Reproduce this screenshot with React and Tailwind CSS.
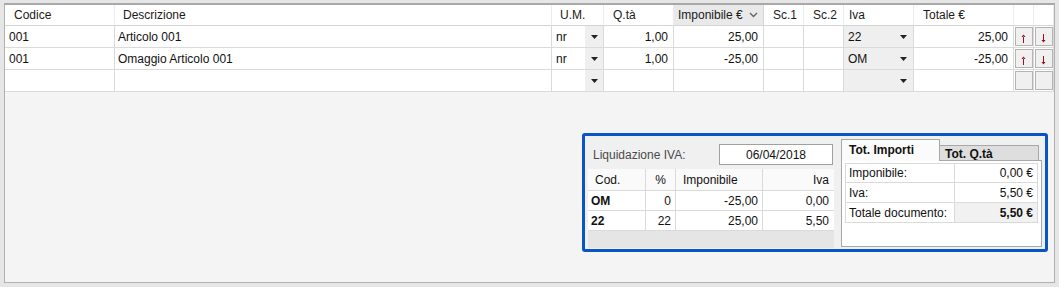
import React from "react";

const cols = "grid-cols-[110px_437px_52px_70px_90px_40px_40px_70px_100px_20px_20px]";

function Arrow() {
  return (
    <svg width="7" height="4" viewBox="0 0 7 4" className="block">
      <path d="M0 0H7L3.5 4Z" fill="#222" />
    </svg>
  );
}

function HeaderCell({ children, className = "" }) {
  return (
    <div className={"h-[21px] border-r border-[#ececec] border-b border-b-[#d4d4d4] flex items-center text-[12px] text-[#1a1a1a] " + className}>
      {children}
    </div>
  );
}

function Cell({ children, className = "" }) {
  return (
    <div className={"h-[22px] border-r border-b border-[#dadada] flex items-center text-[12px] text-[#111] " + className}>
      {children}
    </div>
  );
}

function UpDown({ up }) {
  return (
    <svg width="5" height="9" viewBox="0 0 5 9" className="block">
      {up ? (
        <path d="M2.5 0.5L0.5 3H4.5Z M2 2.5H3V9H2Z" fill="#9a0d24" />
      ) : (
        <path d="M2.5 8.5L0.5 6H4.5Z M2 0H3V6.5H2Z" fill="#9a0d24" />
      )}
    </svg>
  );
}

function Btn({ children }) {
  return (
    <div className="h-[22px] border-r border-b border-[#dadada] flex items-center justify-center bg-white">
      <div className="w-[18px] h-[19px] border border-[#b4b4b4] bg-[#f0f0f0] flex items-center justify-center pt-[3px]">
        {children}
      </div>
    </div>
  );
}

function Row({ cod, desc, um, qta, imp, iva, tot, buttons }) {
  return (
    <>
      <Cell className="pl-[4px]">{cod}</Cell>
      <Cell className="pl-[3px]">{desc}</Cell>
      <Cell className="pl-[4px] justify-between !pr-0 border-r-[#dadada]">
        <span>{um}</span>
        <span className="w-[18px] h-full bg-[#efefef] flex items-center justify-center"><Arrow /></span>
      </Cell>
      <Cell className="justify-end pr-[5px]">{qta}</Cell>
      <Cell className="justify-end pr-[5px]">{imp}</Cell>
      <Cell></Cell>
      <Cell></Cell>
      <Cell className="bg-[#efefef] pl-[4px] justify-between pr-[6px] text-[#1a1a40]">
        <span>{iva}</span>
        <Arrow />
      </Cell>
      <Cell className="justify-end pr-[5px] text-[#5a5a5a]">{tot}</Cell>
      {buttons ? (
        <>
          <Btn><UpDown up /></Btn>
          <Btn><UpDown /></Btn>
        </>
      ) : (
        <>
          <Btn></Btn>
          <Btn></Btn>
        </>
      )}
    </>
  );
}

export default function App() {
  return (
    <div className="w-[1059px] h-[287px] bg-[#e6e6e6] pt-[3px] pl-[4px] overflow-hidden" style={{ fontFamily: '"Liberation Sans", Arial, sans-serif' }}>
      <div className="w-[1051px] h-[280px] bg-[#f4f4f4] border-t-2 border-t-[#a8a8a8] border-l border-r border-b border-[#b0b0b0] flex flex-col">
        <div className={"grid " + cols + " bg-white"}>
          <HeaderCell className="pl-[9px]">Codice</HeaderCell>
          <HeaderCell className="pl-[8px]">Descrizione</HeaderCell>
          <HeaderCell className="pl-[8px]">U.M.</HeaderCell>
          <HeaderCell className="pl-[9px]">Q.tà</HeaderCell>
          <HeaderCell className="pl-[4px] bg-[#e9e9e9] justify-between pr-[5px] border-r-[#d8d8d8]">
            <span>Imponibile €</span>
            <svg width="9" height="6" viewBox="0 0 9 6"><path d="M1 1L4.5 4.5L8 1" stroke="#666" strokeWidth="1.4" fill="none" /></svg>
          </HeaderCell>
          <HeaderCell className="pl-[9px]">Sc.1</HeaderCell>
          <HeaderCell className="pl-[9px]">Sc.2</HeaderCell>
          <HeaderCell className="pl-[5px]">Iva</HeaderCell>
          <HeaderCell className="pl-[9px]">Totale €</HeaderCell>
          <HeaderCell></HeaderCell>
          <HeaderCell></HeaderCell>

          <Row cod="001" desc="Articolo 001" um="nr" qta="1,00" imp="25,00" iva="22" tot="25,00" buttons />
          <Row cod="001" desc="Omaggio Articolo 001" um="nr" qta="1,00" imp="-25,00" iva="OM" tot="-25,00" buttons />
          <Row cod="" desc="" um="" qta="" imp="" iva="" tot="" />
        </div>

        <div className="flex justify-end pr-[6px] mt-[41px]">
          <div className="w-[466px] h-[119px] border-[3px] border-[#0a55c6] rounded-[3px] bg-[#f0f0f0] flex pl-[2px] pt-[2px]">
            {/* left panel */}
            <div className="w-[249px] h-[110px] flex flex-col">
              <div className="h-[31px] flex items-center pl-[6px] pt-[2px]">
                <span className="text-[12px] text-[#4a4a4a] w-[126px]">Liquidazione IVA:</span>
                <div className="w-[114px] h-[21px] bg-white border border-[#a0a0a0] flex items-center justify-center text-[12px] text-[#111]">06/04/2018</div>
              </div>
              <div className="bg-[#e5e5e5] flex-1 ml-[1px] mr-[2px]">
                <div className="grid grid-cols-[58px_30px_87px_71px] bg-white text-[12px] text-[#111]">
                  <div className="h-[22px] border-r border-b border-[#dadada] flex items-center pl-[7px] bg-[#fafafa]">Cod.</div>
                  <div className="h-[22px] border-r border-b border-[#dadada] flex items-center justify-center bg-[#fafafa]">%</div>
                  <div className="h-[22px] border-r border-b border-[#dadada] flex items-center pl-[7px] bg-[#fafafa]">Imponibile</div>
                  <div className="h-[22px] border-b border-[#dadada] flex items-center justify-end pr-[5px] bg-[#fafafa]">Iva</div>

                  <div className="h-[20px] border-r border-b border-[#dadada] flex items-center pl-[3px] font-bold">OM</div>
                  <div className="h-[20px] border-r border-b border-[#dadada] flex items-center justify-end pr-[4px]">0</div>
                  <div className="h-[20px] border-r border-b border-[#dadada] flex items-center justify-end pr-[4px]">-25,00</div>
                  <div className="h-[20px] border-b border-[#dadada] flex items-center justify-end pr-[5px]">0,00</div>

                  <div className="h-[20px] border-r border-b border-[#dadada] flex items-center pl-[3px] font-bold">22</div>
                  <div className="h-[20px] border-r border-b border-[#dadada] flex items-center justify-end pr-[4px]">22</div>
                  <div className="h-[20px] border-r border-b border-[#dadada] flex items-center justify-end pr-[4px]">25,00</div>
                  <div className="h-[20px] border-b border-[#dadada] flex items-center justify-end pr-[5px]">5,50</div>
                </div>
              </div>
            </div>

            {/* right panel with tabs */}
            <div className="ml-[5px] pt-[1px] flex flex-col w-[201px]">
              <div className="flex items-end h-[22px]">
                <div className="w-[99px] h-[22px] bg-[#fbfbfb] border border-b-0 border-[#a8a8a8] flex items-center pl-[7px] pb-[2px] text-[12px] font-bold text-[#111] relative z-10">Tot. Importi</div>
                <div className="w-[99px] h-[16px] bg-[#dedede] border border-l-0 border-b-0 border-[#a8a8a8] flex items-center pl-[5px] text-[12px] font-bold text-[#111]">Tot. Q.tà</div>
              </div>
              <div className="h-[87px] bg-white border border-[#a8a8a8] -mt-[1px] px-[3px] pt-[2px]">
                <div className="grid grid-cols-[109px_84px] text-[12px] text-[#111]">
                  <div className="h-[20px] border border-r-0 border-[#dadada] flex items-center pl-[3px]">Imponibile:</div>
                  <div className="h-[20px] border border-[#dadada] flex items-center justify-end pr-[4px]">0,00 €</div>
                  <div className="h-[20px] border-l border-b border-[#dadada] flex items-center pl-[3px]">Iva:</div>
                  <div className="h-[20px] border-l border-r border-b border-[#dadada] flex items-center justify-end pr-[4px]">5,50 €</div>
                  <div className="h-[20px] border-l border-b border-[#dadada] flex items-center pl-[3px]">Totale documento:</div>
                  <div className="h-[20px] border-l border-r border-b border-[#dadada] flex items-center justify-end pr-[4px] bg-[#f1f1f1] font-bold">5,50 €</div>
                </div>
              </div>
            </div>
          </div>
        </div>
      </div>
    </div>
  );
}
